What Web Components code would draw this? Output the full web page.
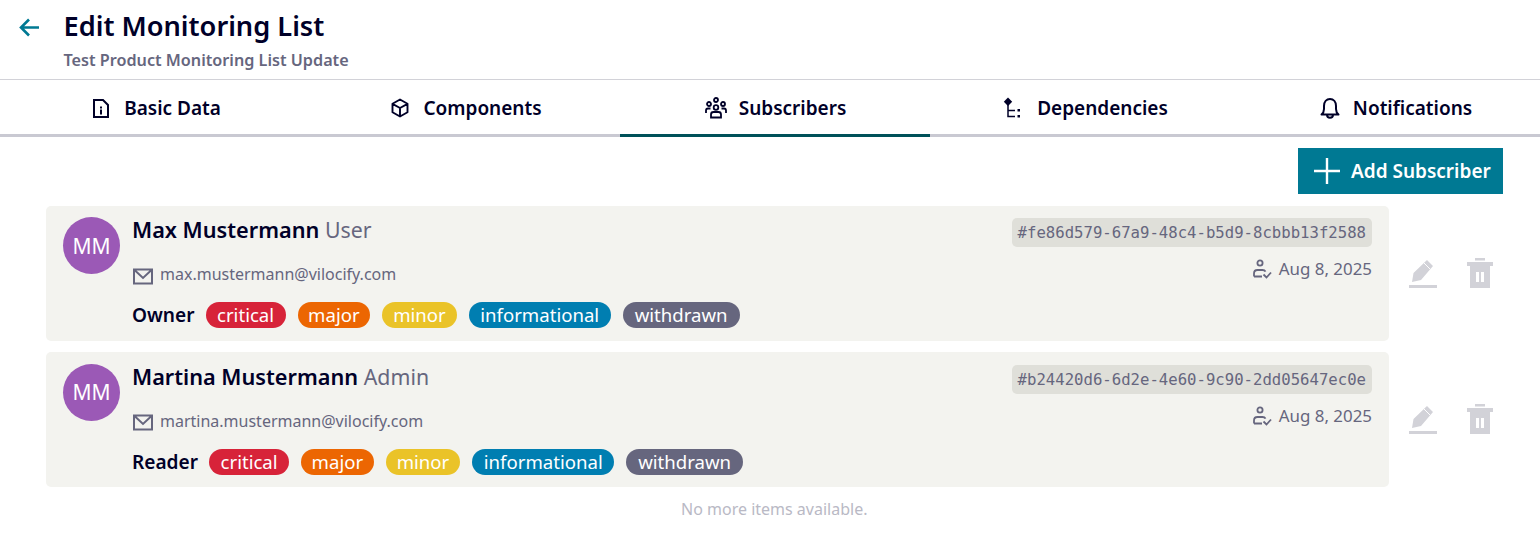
<!DOCTYPE html>
<html lang="en">
<head>
<meta charset="utf-8">
<title>Edit Monitoring List</title>
<style>
html,body{margin:0;padding:0;background:#fff;overflow:hidden;}
body{font-family:"Noto Sans",sans-serif;color:#000028;}
</style>
</head>
<body>
<page-header title-text="Edit Monitoring List" sub-text="Test Product Monitoring List Update"></page-header>
<tab-bar>
    <tab-item label="Basic Data" icon="info"></tab-item>
    <tab-item label="Components" icon="cube"></tab-item>
    <tab-item label="Subscribers" icon="users" active></tab-item>
    <tab-item label="Dependencies" icon="deps"></tab-item>
    <tab-item label="Notifications" icon="bell"></tab-item>
</tab-bar>
<add-row label="Add Subscriber"></add-row>
<subscriber-list>
    <subscriber-row name="Max Mustermann" role="User" email="max.mustermann@vilocify.com" access="Owner" uid="#fe86d579-67a9-48c4-b5d9-8cbbb13f2588" date="Aug 8, 2025"></subscriber-row>
    <subscriber-row name="Martina Mustermann" role="Admin" email="martina.mustermann@vilocify.com" access="Reader" uid="#b24420d6-6d2e-4e60-9c90-2dd05647ec0e" date="Aug 8, 2025"></subscriber-row>
</subscriber-list>
<script>
const tabIcons = {
    info:`<path d="M5 4h9l5 5v12h-14z" fill="none" stroke="currentColor" stroke-width="2"/><path d="M11 10.500h2v2h-2zM11 13.500h2v5h-2z" fill="currentColor"/>`,
    cube:`<path d="M12 3.500l7.500 4.300v8.400l-7.500 4.300-7.500-4.300v-8.400zM4.500 7.800l7.500 4.200 7.500-4.200M12 12v8.500" fill="none" stroke="currentColor" stroke-width="1.900" stroke-linejoin="round"/>`,
    users:`<g fill="none" stroke="currentColor" stroke-width="1.800"><circle cx="12" cy="4" r="2"/><circle cx="12" cy="11.500" r="2.300"/><circle cx="5" cy="8" r="2"/><circle cx="19" cy="8" r="2"/><path d="M2 17v-2.500c0-1 1-2 2-2h2.500M22 17v-2.500c0-1-1-2-2-2h-2.500"/><path d="M7 21.500v-3c0-1.500 1-2.500 2.500-2.500h5c1.500 0 2.500 1 2.500 2.500v3z"/></g>`,
    deps:`<path d="M6 1.500l4.200 4.200-4.200 4.200-4.200-4.200z" fill="currentColor"/><path d="M6 9v11.500h7M6 14.500h7" fill="none" stroke="currentColor" stroke-width="1.500"/><path d="M15.500 13h2.500v2.500h-2.500zM15.500 19h2.500v2.500h-2.500z" fill="currentColor"/>`,
    bell:`<path d="M3.500 18.500c1.800-1.500 2.500-3 2.500-5.500v-3c0-4 2.500-7 6-7s6 3 6 7v3c0 2.500.7 4 2.500 5.500zM9 18.500c0 2 1.200 3.300 3 3.300s3-1.300 3-3.300" fill="none" stroke="currentColor" stroke-width="2" stroke-linejoin="round"/>`
};

const headerTemplate = document.createElement("template");
headerTemplate.innerHTML = `
<style>
:host{display:flex;height:79px;border-bottom:1px solid #d2d2d8;box-sizing:content-box;}
#back{width:63.500px;padding:14px 0 0 18px;box-sizing:border-box;color:#007993;}
#back svg{display:block;width:24px;height:24px;}
h1{margin:6px 0 0 0;font-size:27.200px;line-height:40px;font-weight:600;color:#000028;}
p{margin:2px 0 0 0;font-size:16.200px;line-height:24px;font-weight:600;color:#66667e;}
</style>
<div id="back"><svg viewBox="0 0 24 24"><path d="M21 13.500H3.500M11 5.500l-8 8 8 8" fill="none" stroke="currentColor" stroke-width="2.600"/></svg></div>
<div><h1 id="title"></h1><p id="sub"></p></div>
`;
class PageHeader extends HTMLElement{
    constructor(){
        super();
        this.attachShadow({mode: "open"});
        this.shadowRoot.appendChild(headerTemplate.content.cloneNode(true));
    }
    connectedCallback(){
        this.shadowRoot.getElementById("title").textContent = this.getAttribute("title-text");
        this.shadowRoot.getElementById("sub").textContent = this.getAttribute("sub-text");
    }
}
customElements.define("page-header", PageHeader);

const tabBarTemplate = document.createElement("template");
tabBarTemplate.innerHTML = `
<style>
:host{display:block;width:1540px;overflow:hidden;}
#bar{display:flex;width:1550px;}
</style>
<div id="bar"><slot></slot></div>
`;
class TabBar extends HTMLElement{
    constructor(){
        super();
        this.attachShadow({mode: "open"});
        this.shadowRoot.appendChild(tabBarTemplate.content.cloneNode(true));
    }
}
customElements.define("tab-bar", TabBar);

const tabTemplate = document.createElement("template");
tabTemplate.innerHTML = `
<style>
:host{display:flex;flex:0 0 310px;height:57px;box-sizing:border-box;border-bottom:3px solid #c9c9d2;align-items:center;justify-content:center;gap:11px;font-size:19px;font-weight:600;color:#000028;padding-top:2px;}
:host([active]){border-bottom-color:#005159;}
svg{width:24px;height:24px;display:block;}
</style>
<svg viewBox="0 0 24 24" id="icon"></svg><span id="label"></span>
`;
class TabItem extends HTMLElement{
    constructor(){
        super();
        this.attachShadow({mode: "open"});
        this.shadowRoot.appendChild(tabTemplate.content.cloneNode(true));
    }
    connectedCallback(){
        this.shadowRoot.getElementById("label").textContent = this.getAttribute("label");
        this.shadowRoot.getElementById("icon").innerHTML = tabIcons[this.getAttribute("icon")];
    }
}
customElements.define("tab-item", TabItem);

const addTemplate = document.createElement("template");
addTemplate.innerHTML = `
<style>
:host{display:flex;justify-content:flex-end;padding:11px 37px 12px 0;}
button{display:flex;align-items:center;gap:11px;height:46px;width:205px;box-sizing:border-box;padding:0 0 0 16px;border:0;background:#007993;color:#fff;font:600 19px "Noto Sans",sans-serif;}
svg{width:26px;height:26px;display:block;}
</style>
<button><svg viewBox="0 0 26 26"><path d="M13 0v26M0 13h26" stroke="currentColor" stroke-width="2.400" fill="none"/></svg><span id="label"></span></button>
`;
class AddRow extends HTMLElement{
    constructor(){
        super();
        this.attachShadow({mode: "open"});
        this.shadowRoot.appendChild(addTemplate.content.cloneNode(true));
    }
    connectedCallback(){
        this.shadowRoot.getElementById("label").textContent = this.getAttribute("label");
    }
}
customElements.define("add-row", AddRow);

const listTemplate = document.createElement("template");
listTemplate.innerHTML = `
<style>
:host{display:block;padding-left:46px;}
#rows{display:flex;flex-direction:column;gap:11.500px;}
p{margin:10.700px 0 0 0;width:1456.500px;text-align:center;font-size:16px;line-height:22px;color:#b9b9c5;}
</style>
<div id="rows"><slot></slot></div>
<p>No more items available.</p>
`;
class SubscriberList extends HTMLElement{
    constructor(){
        super();
        this.attachShadow({mode: "open"});
        this.shadowRoot.appendChild(listTemplate.content.cloneNode(true));
    }
}
customElements.define("subscriber-list", SubscriberList);

const chipTemplate = document.createElement("template");
chipTemplate.innerHTML = `
<style>
:host{display:inline-block;height:26px;line-height:25px;padding:0 var(--pad,12px);border-radius:13px;font-size:18.600px;color:#fff;background:var(--chip,#66667e);}
</style>
<slot></slot>
`;
class SeverityChip extends HTMLElement{
    constructor(){
        super();
        this.attachShadow({mode: "open"});
        this.shadowRoot.appendChild(chipTemplate.content.cloneNode(true));
    }
}
customElements.define("severity-chip", SeverityChip);

const rowTemplate = document.createElement("template");
rowTemplate.innerHTML = `
<style>
:host{display:flex;align-items:stretch;}
#card{flex:0 0 1343px;height:134.900px;box-sizing:border-box;display:flex;padding:11.300px 17px 0 17px;background:#f3f3ef;border-radius:5px;}
#avatar{flex:0 0 57px;height:57px;border-radius:50%;background:#9b59b6;color:#fff;font-size:21px;display:flex;align-items:center;justify-content:center;margin-right:12px;}
#main{flex:1;min-width:0;}
#name{font-size:21.700px;line-height:27px;font-weight:600;color:#000028;margin-top:-1px;}
#role{font-weight:400;font-size:21.300px;color:#66667e;}
#mail{display:flex;align-items:center;gap:7px;margin-top:19.500px;font-size:16px;line-height:22px;color:#66667e;}
#mail svg{width:20px;height:20px;display:block;margin:3px 0 0 1px;}
#tags{display:flex;align-items:center;gap:12px;margin-top:16.500px;height:26px;}
#access{font-size:19.100px;font-weight:600;margin-right:-1px;color:#000028;}
#side{display:flex;flex-direction:column;align-items:flex-end;padding-top:1px;}
#uid{height:29px;padding:0 6px;box-sizing:border-box;border-radius:5px;background:#dfdfd9;font:15.650px/29px "DejaVu Sans Mono",monospace;color:#66667e;white-space:nowrap;}
#date{display:flex;align-items:center;gap:7px;margin-top:10px;font-size:16.900px;line-height:24px;color:#66667e;}
#date svg{width:20px;height:20px;display:block;}
#actions{display:flex;gap:30px;padding:52px 0 0 20px;color:#d2d2d8;}
#actions svg{height:30px;display:block;}
</style>
<div id="card">
    <div id="avatar">MM</div>
    <div id="main">
        <div id="name"><span id="fullname"></span> <span id="role"></span></div>
        <div id="mail"><svg viewBox="0 0 20 20"><path d="M1 3.500h18v14h-18zM1.500 4l8.500 8 8.500-8" fill="none" stroke="currentColor" stroke-width="2"/></svg><span id="email"></span></div>
        <div id="tags">
            <span id="access"></span>
            <severity-chip style="--chip:#d72339;--pad:11.500px">critical</severity-chip>
            <severity-chip style="--chip:#ec6602;--pad:10.500px">major</severity-chip>
            <severity-chip style="--chip:#eac328;--pad:11px">minor</severity-chip>
            <severity-chip style="--chip:#007eb1;--pad:11.500px">informational</severity-chip>
            <severity-chip style="--chip:#66667e">withdrawn</severity-chip>
        </div>
    </div>
    <div id="side">
        <div id="uid"></div>
        <div id="date"><svg viewBox="0 0 20 20"><g fill="none" stroke="currentColor" stroke-width="1.800"><circle cx="8" cy="4" r="2.600"/><path d="M2 17.500v-3c0-2 1.500-3.500 3.500-3.500h5c1.500 0 2.500.7 3 1.700M2 17.500h8M11.500 15.500l3 3 4.500-5"/></g></svg><span id="datetext"></span></div>
    </div>
</div>
<div id="actions">
    <svg viewBox="0 0 28 30" width="28"><path d="M3 24l1.500-9L18 2l6 6-12 14zM0 27h28v3h-28z" fill="currentColor"/><path d="M15 5l6 6" stroke="#fff" stroke-width="1" fill="none"/></svg>
    <svg viewBox="0 0 26 30" width="26"><path d="M8 0h10v2.500h-10zM0 4h26v4h-26zM3 8h20v22h-20z" fill="currentColor"/><path d="M9 14h3v10h-3zM14 14h3v10h-3z" fill="#fff"/></svg>
</div>
`;
class SubscriberRow extends HTMLElement{
    constructor(){
        super();
        this.attachShadow({mode: "open"});
        this.shadowRoot.appendChild(rowTemplate.content.cloneNode(true));
    }
    connectedCallback(){
        const root = this.shadowRoot;
        root.getElementById("fullname").textContent = this.getAttribute("name");
        root.getElementById("role").textContent = this.getAttribute("role");
        root.getElementById("email").textContent = this.getAttribute("email");
        root.getElementById("access").textContent = this.getAttribute("access");
        root.getElementById("uid").textContent = this.getAttribute("uid");
        root.getElementById("datetext").textContent = this.getAttribute("date");
    }
}
customElements.define("subscriber-row", SubscriberRow);
</script>
</body>
</html>
